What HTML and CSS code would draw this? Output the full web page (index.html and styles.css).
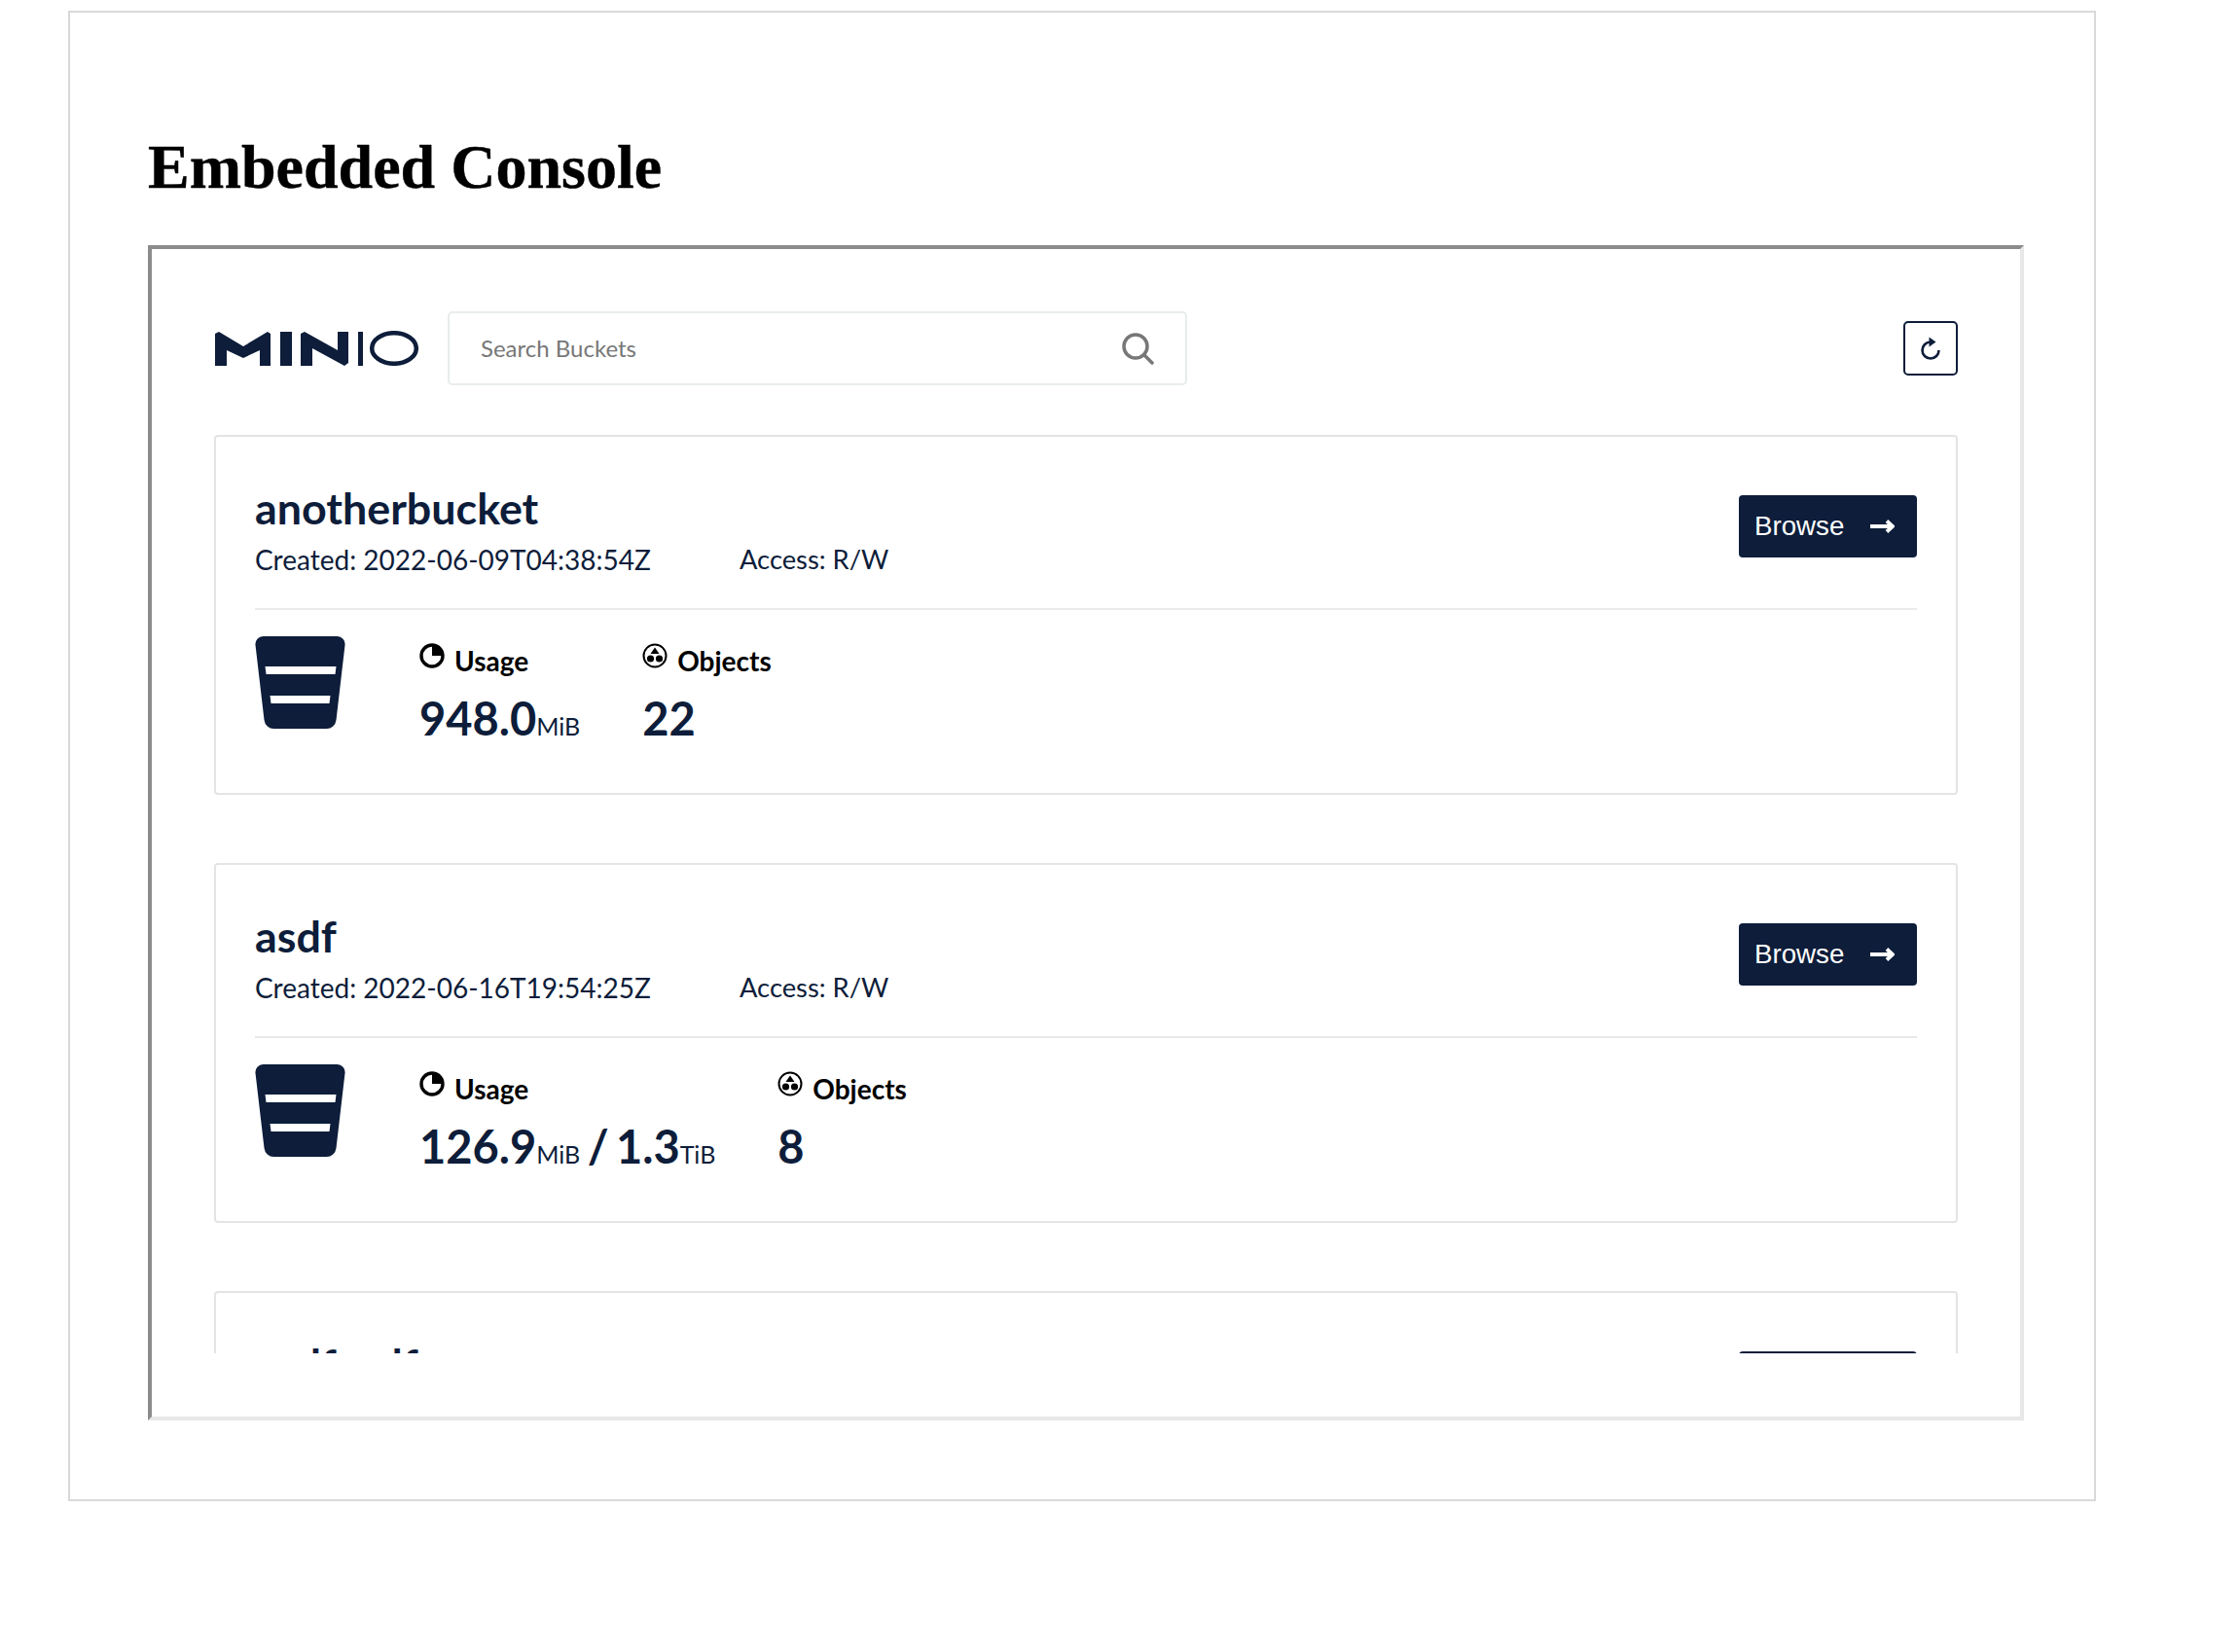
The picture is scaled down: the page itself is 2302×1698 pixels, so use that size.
FILE: index.html
```html
<!DOCTYPE html>
<html lang="en">
<head>
    <meta charset="UTF-8">
    <title>Embedded Console</title>
    <link rel="stylesheet" href="styles.css">
</head>
<body>
    <div class="page">
        <h1>Embedded Console</h1>

        <!-- Embedded console frame -->
        <div class="frame">
            <div class="console">
                <div class="toolbar">
                    <svg class="logo" viewBox="0 0 210 36">
                        <path fill="#0d1d3a" d="M1 36V3l4-2 25 15L55 1l3 2v33H47V20l-17 8-17-8v16z"/>
                        <rect fill="#0d1d3a" x="68" y="1" width="12" height="35"/>
                        <path fill="#0d1d3a" d="M89 36V3l4-2 34 19V1h11v32l-4 3-33-18v18z"/>
                        <rect fill="#0d1d3a" x="148" y="1" width="5" height="35"/>
                        <ellipse fill="none" stroke="#0d1d3a" stroke-width="4.500" cx="185" cy="18" rx="22.800" ry="15.800"/>
                    </svg>
                    <div class="search">
                        <span class="search-text">Search Buckets</span>
                        <svg class="search-icon" viewBox="0 0 34 34">
                            <circle cx="15" cy="15" r="12" fill="none" stroke="#777" stroke-width="3.500"/>
                            <path d="M24 24l8 8" stroke="#777" stroke-width="3.500" stroke-linecap="round"/>
                        </svg>
                    </div>
                    <button class="refresh">
                        <svg viewBox="0 0 24 24" width="24" height="24">
                            <path d="M12 5.500a8.500 8.500 0 1 0 8.500 8.500" fill="none" stroke="#0d1d3a" stroke-width="2.600"/>
                            <path d="M10.500 0.500l7 5-7 5z" fill="#0d1d3a"/>
                        </svg>
                    </button>
                </div>

                <!-- Bucket 1 -->
                <div class="card">
                    <div class="card-head">
                        <div>
                            <div class="bucket-name">anotherbucket</div>
                            <div class="bucket-meta">
                                <span class="created">Created: 2022-06-09T04:38:54Z</span>
                                <span class="access">Access: R/W</span>
                            </div>
                        </div>
                        <button class="browse">Browse
                            <svg viewBox="0 0 26 18" width="26" height="18"><path d="M1 9h23M18 3.500l6 5.500-6 5.500" fill="none" stroke="#fff" stroke-width="3.800"/></svg>
                        </button>
                    </div>
                    <div class="card-body">
                        <svg class="bucket-icon" viewBox="0 0 92 95">
                            <path fill="#0d1d3a" d="M8 0h76a8 8 0 0 1 8 9l-9 77a10 10 0 0 1-10 9H19a10 10 0 0 1-10-9L0 9a8 8 0 0 1 8-9z"/>
                            <path fill="#fff" d="M10 31h73l-1 8H11zM15 61h62l-1 8H16z"/>
                        </svg>
                        <div class="stat">
                            <div class="stat-label">
                                <svg viewBox="0 0 26 26" width="26" height="26"><circle cx="13" cy="13" r="11" fill="none" stroke="#000" stroke-width="3.400"/><path d="M13 2a11 11 0 0 1 11 11H13z"/></svg>
                                Usage
                            </div>
                            <div class="stat-value">948.0<span class="unit">MiB</span></div>
                        </div>
                        <div class="stat">
                            <div class="stat-label">
                                <svg viewBox="0 0 26 26" width="26" height="26"><circle cx="13" cy="13" r="11.500" fill="none" stroke="#000" stroke-width="2"/><path d="M13 4.500l4.500 6.500h-9z"/><circle cx="8.500" cy="16" r="3.600"/><circle cx="17.500" cy="16" r="3.600"/></svg>
                                Objects
                            </div>
                            <div class="stat-value">22</div>
                        </div>
                    </div>
                </div>

                <!-- Bucket 2 -->
                <div class="card">
                    <div class="card-head">
                        <div>
                            <div class="bucket-name">asdf</div>
                            <div class="bucket-meta">
                                <span class="created">Created: 2022-06-16T19:54:25Z</span>
                                <span class="access">Access: R/W</span>
                            </div>
                        </div>
                        <button class="browse">Browse
                            <svg viewBox="0 0 26 18" width="26" height="18"><path d="M1 9h23M18 3.500l6 5.500-6 5.500" fill="none" stroke="#fff" stroke-width="3.800"/></svg>
                        </button>
                    </div>
                    <div class="card-body">
                        <svg class="bucket-icon" viewBox="0 0 92 95">
                            <path fill="#0d1d3a" d="M8 0h76a8 8 0 0 1 8 9l-9 77a10 10 0 0 1-10 9H19a10 10 0 0 1-10-9L0 9a8 8 0 0 1 8-9z"/>
                            <path fill="#fff" d="M10 31h73l-1 8H11zM15 61h62l-1 8H16z"/>
                        </svg>
                        <div class="stat">
                            <div class="stat-label">
                                <svg viewBox="0 0 26 26" width="26" height="26"><circle cx="13" cy="13" r="11" fill="none" stroke="#000" stroke-width="3.400"/><path d="M13 2a11 11 0 0 1 11 11H13z"/></svg>
                                Usage
                            </div>
                            <div class="stat-value">126.9<span class="unit">MiB</span> / 1.3<span class="unit">TiB</span></div>
                        </div>
                        <div class="stat">
                            <div class="stat-label">
                                <svg viewBox="0 0 26 26" width="26" height="26"><circle cx="13" cy="13" r="11.500" fill="none" stroke="#000" stroke-width="2"/><path d="M13 4.500l4.500 6.500h-9z"/><circle cx="8.500" cy="16" r="3.600"/><circle cx="17.500" cy="16" r="3.600"/></svg>
                                Objects
                            </div>
                            <div class="stat-value">8</div>
                        </div>
                    </div>
                </div>

                <!-- Bucket 3, cut off by the frame -->
                <div class="card">
                    <div class="card-head">
                        <div>
                            <div class="bucket-name">asdfasdf</div>
                        </div>
                        <button class="browse">Browse</button>
                    </div>
                </div>
            </div>
        </div>
    </div>
</body>
</html>
```

FILE: styles.css
```css
body {
    margin: 0;
    background-color: #ffffff;
    font-family: "Liberation Serif", serif;
}

.page {
    box-sizing: border-box;
    width: 2084px;
    height: 1532px;
    margin: 11px 0 0 70px;
    padding: 121px 72px 0 80px;
    border: 2px solid #d9d9d9;
}

h1 {
    margin: 0 0 42px;
    font-size: 64px;
    line-height: 76px;
    color: #000;
    -webkit-text-stroke: 0.4px #000;
}

/* Looks like a default iframe border */
.frame {
    box-sizing: border-box;
    height: 1208px;
    padding: 0 64px 65px;
    border: 4px solid;
    border-color: #8c8c8c #e8e8e8 #e8e8e8 #8c8c8c;
}

.console {
    height: 100%;
    overflow: hidden;
    font-family: Lato, sans-serif;
    color: #0d1d3a;
}

.toolbar {
    display: flex;
    align-items: center;
    height: 76px;
    margin: 64px 0 0;
}

.logo {
    width: 210px;
    height: 36px;
    margin-right: 30px;
}

.search {
    box-sizing: border-box;
    display: flex;
    align-items: center;
    justify-content: space-between;
    width: 760px;
    height: 76px;
    padding: 0 32px;
    border: 2px solid #e8ecec;
    border-radius: 5px;
}

.search-text {
    margin-bottom: 2px;
    font-size: 24px;
    color: #777;
}

.search-icon {
    width: 34px;
    height: 34px;
}

.refresh {
    display: flex;
    align-items: center;
    justify-content: center;
    width: 56px;
    height: 56px;
    margin-left: auto;
    padding: 0;
    background: #fff;
    border: 2px solid #0d1d3a;
    border-radius: 5px;
}

.card {
    box-sizing: border-box;
    height: 370px;
    margin-top: 70px;
    padding: 0 40px;
    border: 2px solid #e4e4e4;
    border-radius: 4px;
}

.toolbar + .card {
    margin-top: 51px;
}

.card-head {
    display: flex;
    justify-content: space-between;
    align-items: flex-start;
    height: 178px;
    padding-top: 47px;
    box-sizing: border-box;
    border-bottom: 2px solid #eaeaea;
}

.bucket-name {
    font-size: 44.800px;
    line-height: 52px;
    font-weight: 700;
}

.bucket-meta {
    display: flex;
    margin-top: 9px;
    font-size: 28px;
    line-height: 36px;
}

.created {
    width: 498px;
}

.access {
    font-size: 27.300px;
}

.browse {
    display: flex;
    align-items: center;
    justify-content: space-between;
    box-sizing: border-box;
    width: 183px;
    height: 64px;
    margin-top: 13px;
    padding: 0 23px 0 16px;
    background-color: #0d1d3a;
    border: 0;
    border-radius: 4px;
    font-family: "Liberation Sans", sans-serif;
    font-size: 27.700px;
    color: #fff;
}

.card-body {
    display: flex;
    padding-top: 27px;
}

.bucket-icon {
    width: 93px;
    height: 95px;
    margin-right: 76px;
}

.stat {
    margin-right: 64px;
    padding-top: 7px;
}

.stat-label {
    display: flex;
    align-items: flex-start;
    gap: 10px;
    font-size: 28px;
    line-height: 36px;
    font-weight: 700;
    color: #000;
}

.stat-value {
    margin-top: 11px;
    font-size: 47px;
    line-height: 60px;
    font-weight: 700;
    word-spacing: -4px;
}

.unit {
    font-size: 25px;
    font-weight: 400;
}
```
